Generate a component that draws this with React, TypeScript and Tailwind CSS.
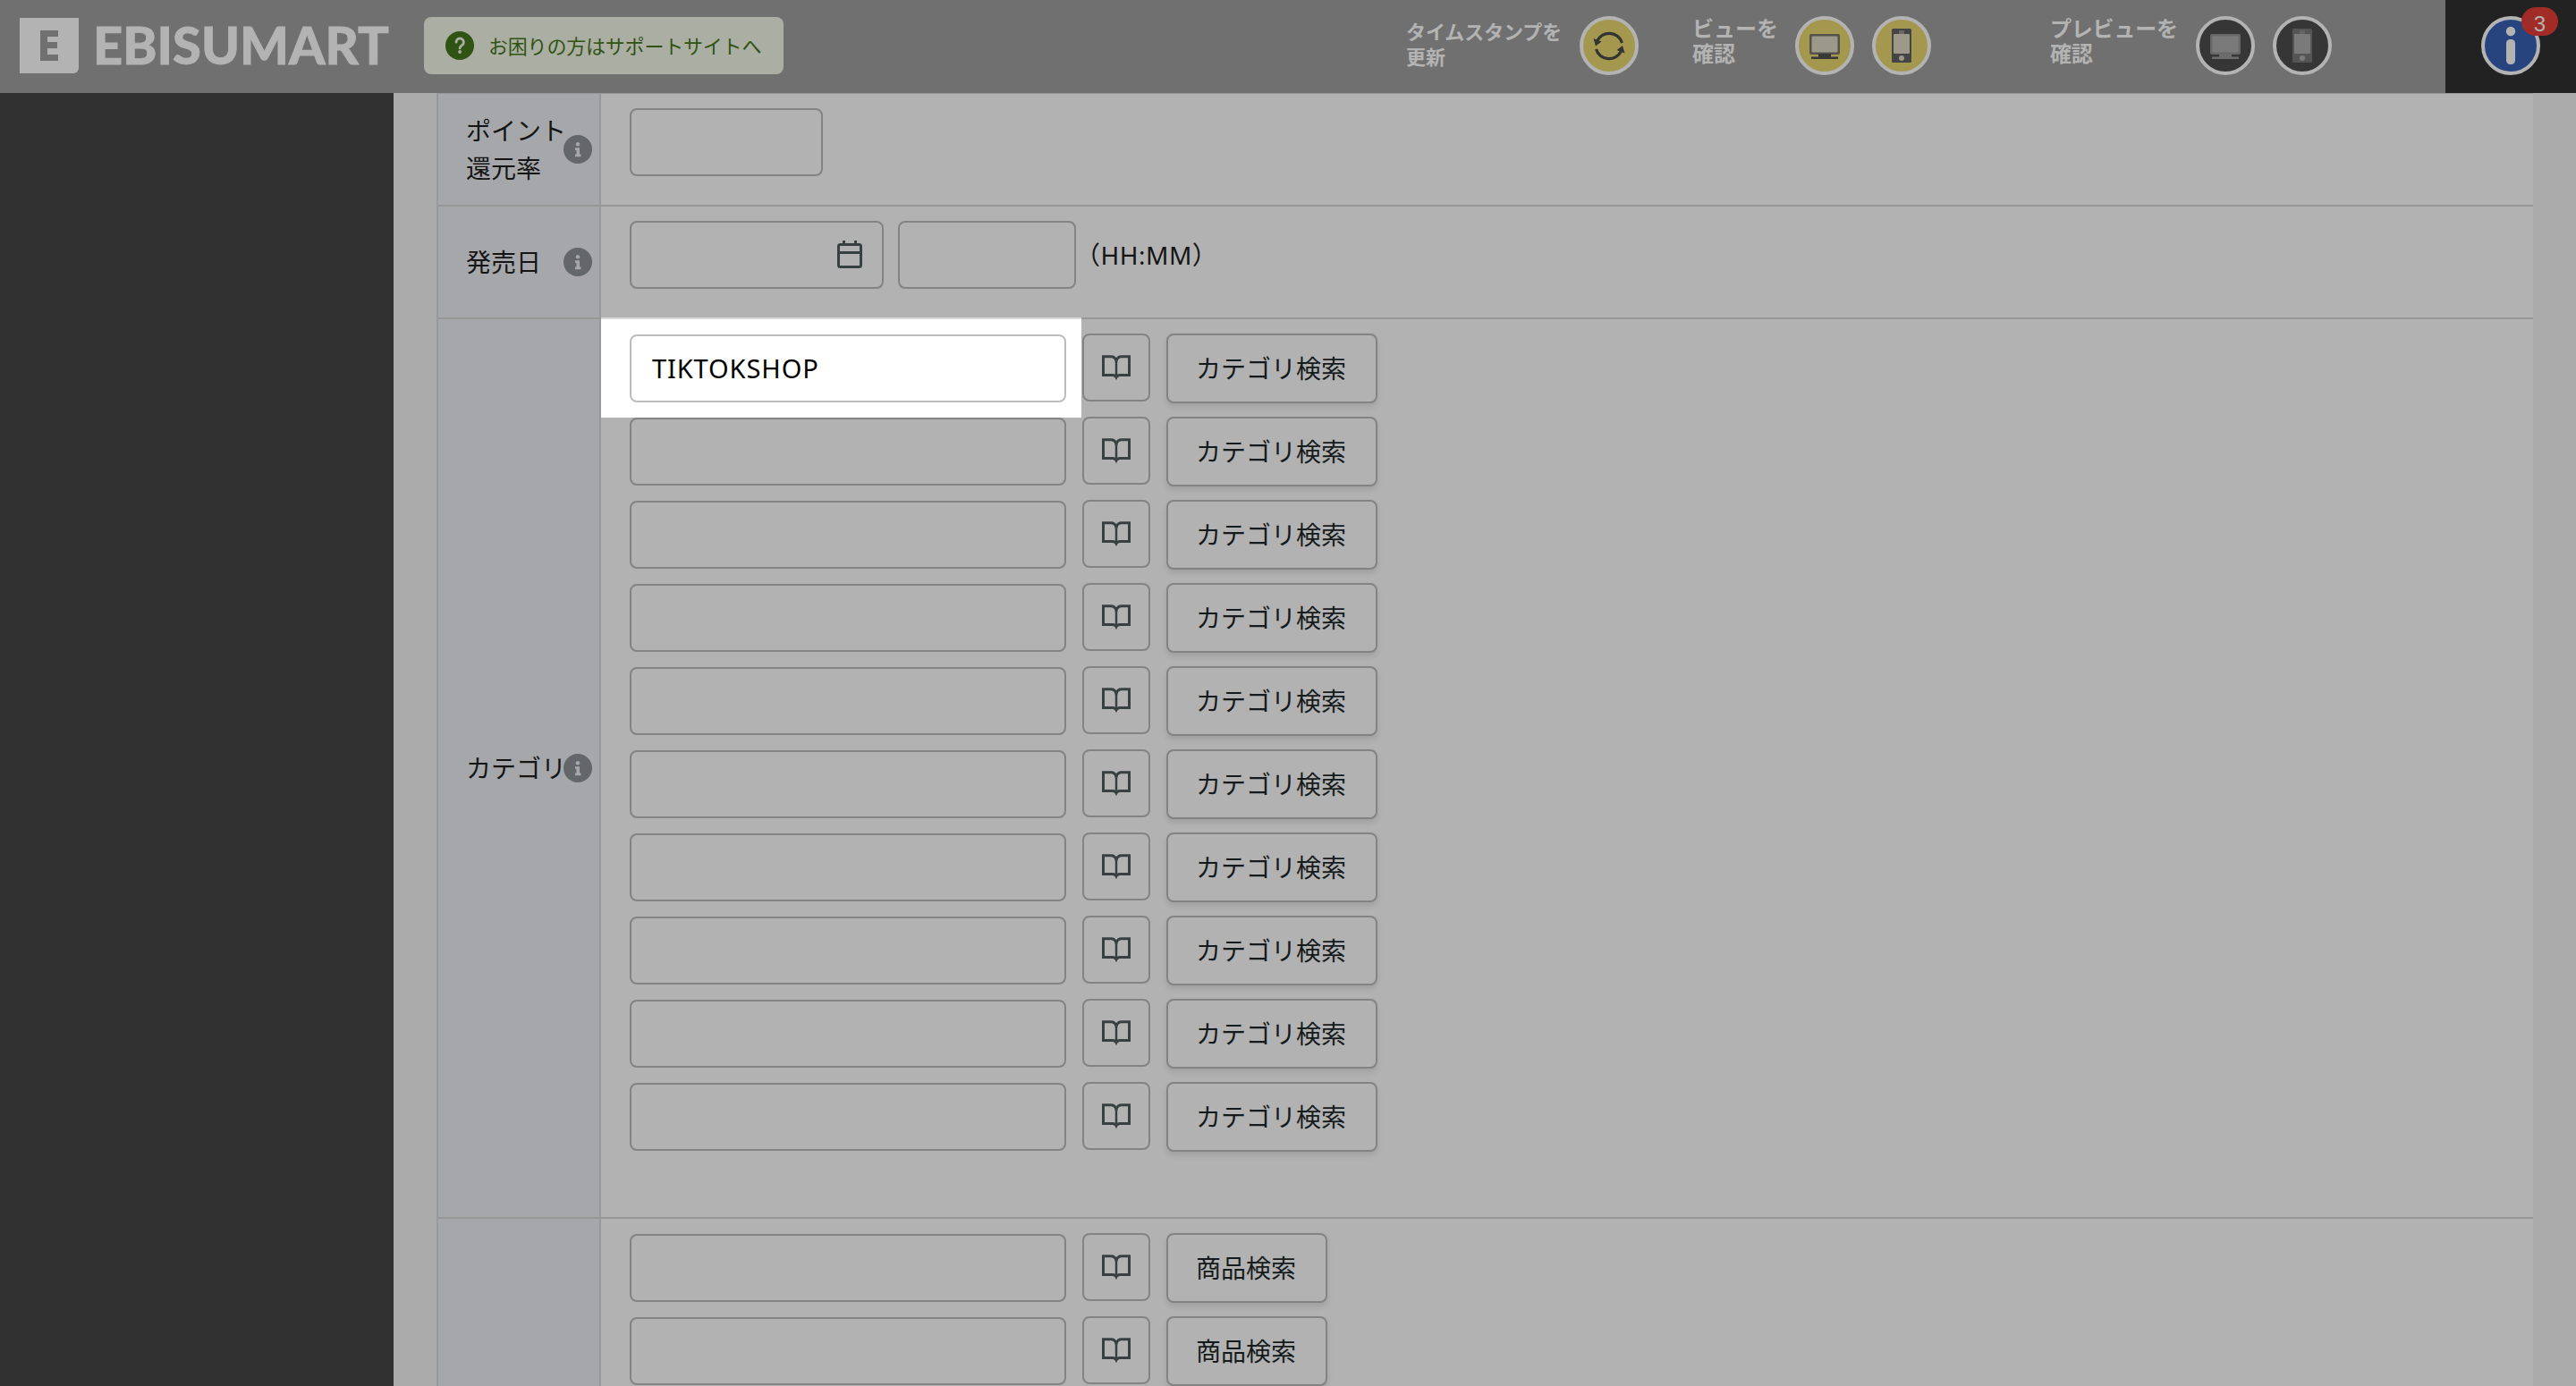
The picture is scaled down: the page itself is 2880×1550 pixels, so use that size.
import type { ReactNode } from "react";

const range = (n: number) => Array.from({ length: n }, (_, i) => i);

const Logo = () => (
    <svg width="420" height="62" viewBox="0 0 420 62" className="ml-[22px] shrink-0">
        <path d="M0 0h66v56a6 6 0 0 1-6 6H0z" fill="#b3b3b3" />
        <path d="M23 14h20v7H31v6h11v7H31v7h12v7H23z" fill="#707070" />
        <text
            x="82"
            y="51.500"
            fontFamily="Lato, sans-serif"
            fontWeight="900"
            fontSize="56.500"
            fill="#b3b3b3"
            stroke="#b3b3b3"
            strokeWidth="0.8"
            textLength="331"
            lengthAdjust="spacingAndGlyphs"
        >
            EBISUMART
        </text>
    </svg>
);

const QuestionIcon = () => (
    <svg width="32" height="32" viewBox="0 0 32 32">
        <circle cx="16" cy="16" r="16" fill="#2f5312" />
        <path d="M12 12.2a4.2 4.2 0 1 1 6.4 3.5c-1.5 1-2.3 1.4-2.3 3.2" fill="none" stroke="#abaea3" strokeWidth="2.8" strokeLinecap="round" />
        <circle cx="16.1" cy="23" r="1.9" fill="#abaea3" />
    </svg>
);

const Round = ({ fill, children }: { fill: string; children: ReactNode }) => (
    <svg width="66" height="66" viewBox="0 0 66 66" className="shrink-0">
        <circle cx="33" cy="33" r="31" fill={fill} stroke="#b3b3b3" strokeWidth="4" />
        {children}
    </svg>
);

const RefreshGlyph = () => (
    <g fill="none" stroke="#333432" strokeWidth="3.2">
        <path d="M19.5 28a15 15 0 0 1 28 2" />
        <path d="M46.5 39a15 15 0 0 1-28-2" />
        <path d="M15.5 25l9 3.5-6.500 5z" fill="#333432" stroke="none" />
        <path d="M50.500 41.500l-9-3.500 6.500-5z" fill="#333432" stroke="none" />
    </g>
);

const MonitorGlyph = ({ frame, base, screen }: { frame: string; base: string; screen: string }) => (
    <g>
        <rect x="16" y="20" width="34" height="23" rx="2" fill={frame} />
        <rect x="18.5" y="22.500" width="29" height="18" rx="1" fill={screen} />
        <path d="M26 42h14v4H26zM18 45.500h30v2.500H18z" fill={base} />
    </g>
);

const PhoneGlyph = ({ frame, screen }: { frame: string; screen: string }) => (
    <g>
        <rect x="22" y="14" width="22" height="38" rx="1.5" fill={frame} />
        <rect x="24" y="20" width="18" height="22" rx="1" fill={screen} />
        <rect x="30" y="16" width="6" height="4" fill={screen} opacity="0.45" />
        <circle cx="33" cy="47" r="3" fill={screen} />
    </g>
);

const InfoIcon = () => (
    <svg width="32" height="32" viewBox="0 0 32 32" className="shrink-0">
        <circle cx="16" cy="16" r="16" fill="#636769" />
        <circle cx="16" cy="10.200" r="2.2" fill="#a5a7aa" />
        <path d="M13 14.200h5v7.300h1.500v2.700h-6.500v-2.700h1.500v-4.600H13z" fill="#a5a7aa" />
    </svg>
);

const CalendarIcon = () => (
    <svg width="30" height="34" viewBox="0 0 30 34" fill="none" stroke="#384042" strokeWidth="3">
        <rect x="2.500" y="6.500" width="25" height="25" rx="2" />
        <path d="M2 15.500h26" />
        <path d="M8.500 2v4M21.500 2v4" />
    </svg>
);

const BookIcon = () => (
    <svg width="32" height="28" viewBox="0 0 32 28" fill="none" stroke="#384042" strokeWidth="3">
        <path d="M16 6.500C15 3 13 1.700 10 1.700H1.500v20.700H12c2 0 3.200.8 4 2.400.8-1.600 2-2.400 4-2.400h10.500V1.700H22c-3 0-5 1.300-6 4.800z" />
        <path d="M16 5v19" strokeWidth="2.500" />
    </svg>
);

const Row = ({ label, height, children }: { label?: ReactNode; height: string; children: ReactNode }) => (
    <div className={`flex shrink-0 border-b-2 border-[#979797] ${height}`}>
        <div className="flex w-[182px] shrink-0 items-center border-r-2 border-[#97999b] bg-[#a5a7aa] pl-[31px]">
            {label && (
                <>
                    <div className="w-[109px] whitespace-nowrap leading-[42px]">{label}</div>
                    <InfoIcon />
                </>
            )}
        </div>
        <div className="relative flex-1 pl-8 pt-4">{children}</div>
    </div>
);

const Box = ({ width, children }: { width: string; children?: ReactNode }) => (
    <div className={`flex h-[76px] shrink-0 items-center rounded-lg border-2 border-[#838383] ${width}`}>{children}</div>
);

const SearchLine = ({ text, wide, value }: { text: string; wide?: boolean; value?: string }) => (
    <div className="relative flex h-[93px] items-start gap-[18px]">
        <div
            className={`mt-px flex h-[76px] w-[488px] items-center rounded-lg border-2 pb-px pl-[23px] text-[29px] font-[450] tracking-[0.9px] text-black ${
                value ? "border-[#bbbcbc]" : "border-[#838383]"
            }`}
        >
            {value}
        </div>
        <div className="flex h-[76px] w-[76px] items-center justify-center rounded-lg border-2 border-[#838383] pb-px">
            <BookIcon />
        </div>
        <div
            className={`flex h-[78px] items-center justify-center rounded-lg border-2 border-[#838383] bg-[#b2b2b2] pr-[2px] text-[#151a1c] shadow-[0_4px_6px_rgba(0,0,0,0.1)] ${
                wide ? "w-[236px]" : "w-[180px]"
            }`}
        >
            {text}
        </div>
    </div>
);

const Header = () => (
    <header className="flex h-[104px] shrink-0 bg-[#707070] font-bold text-[#b3b3b3]">
        <div className="flex h-[102px] w-[1572px] items-center">
            <Logo />
            <div className="ml-[32px] flex h-16 w-[402px] items-center gap-[16px] rounded-lg bg-[#abaea3] pl-6 font-normal text-[22px] tracking-[-0.2px] text-[#2f5312]">
                <QuestionIcon />
                お困りの方はサポートサイトへ
            </div>
        </div>
        <div className="flex h-[102px] w-[320px] items-center">
            <div className="-mt-[4px] w-[194px] whitespace-nowrap text-[22px] leading-7 tracking-[-0.1px]">
                タイムスタンプを
                <br />
                更新
            </div>
            <Round fill="#a4974e">
                <RefreshGlyph />
            </Round>
        </div>
        <div className="flex h-[102px] w-[400px] items-center">
            <div className="-mt-[11px] w-[115px] whitespace-nowrap text-[24px] leading-7">
                ビューを
                <br />
                確認
            </div>
            <div className="flex gap-5">
                <Round fill="#a4974e">
                    <MonitorGlyph frame="#54524a" base="#383838" screen="#9c998b" />
                </Round>
                <Round fill="#a4974e">
                    <PhoneGlyph frame="#444444" screen="#9c998b" />
                </Round>
            </div>
        </div>
        <div className="flex h-[102px] w-[442px] items-center">
            <div className="-mt-[11px] w-[163px] whitespace-nowrap text-[24px] leading-7 tracking-[-0.2px]">
                プレビューを
                <br />
                確認
            </div>
            <div className="flex gap-5">
                <Round fill="#363636">
                    <MonitorGlyph frame="#686868" base="#6c6c6c" screen="#7a7a7a" />
                </Round>
                <Round fill="#363636">
                    <PhoneGlyph frame="#555555" screen="#7a7a7a" />
                </Round>
            </div>
        </div>
        <div className="flex h-[104px] flex-1 bg-[#222222] pl-10 pt-[18px]">
            <div className="relative h-[66px] w-[66px]">
                <Round fill="#27447f">
                    <circle cx="33" cy="17" r="5.2" fill="#b3b3b3" />
                    <rect x="28" y="26" width="10" height="28" rx="4.500" fill="#b3b3b3" />
                </Round>
                <span className="absolute -top-[10px] left-[45px] flex h-8 w-[41px] items-center justify-center rounded-full bg-[#a12b26] pt-[6px] font-['Liberation_Sans',sans-serif] text-[24px] font-normal leading-none">
                    3
                </span>
            </div>
        </div>
    </header>
);

export default function App() {
    return (
        <div className="flex h-[1550px] w-[2880px] flex-col overflow-hidden bg-[#ababab] font-['Noto_Sans','Noto_Sans_CJK_JP',sans-serif] text-[28px] leading-none text-[#151515]">
            <Header />
            <div className="flex min-h-0 flex-1">
                <aside className="w-[440px] shrink-0 bg-[#313131]" />
                <main className="flex flex-1 flex-col overflow-hidden px-12">
                    <div className="flex flex-col border-l-2 border-t border-l-[#97999b] border-t-[#979797] bg-[#b2b2b2]">
                        <Row
                            height="h-[126px]"
                            label={
                                <>
                                    ポイント
                                    <br />
                                    還元率
                                </>
                            }
                        >
                            <Box width="w-[216px]" />
                        </Row>
                        <Row height="h-[126px]" label="発売日">
                            <div className="flex items-center">
                                <Box width="w-[284px]">
                                    <div className="mb-[3px] ml-auto mr-[21px]">
                                        <CalendarIcon />
                                    </div>
                                </Box>
                                <div className="ml-4 flex">
                                    <Box width="w-[199px]" />
                                </div>
                                <span className="-ml-px tracking-[0.5px]">（HH:MM）</span>
                            </div>
                        </Row>
                        <Row height="h-[1006px]" label="カテゴリ">
                            <div className="absolute -top-[2px] left-0 h-[112px] w-[537px] border-t-2 border-[#d9d9d9] bg-white" />
                            {range(10).map((i) => (
                                <SearchLine key={i} wide text="カテゴリ検索" value={i === 0 ? "TIKTOKSHOP" : undefined} />
                            ))}
                        </Row>
                        <Row height="h-[300px]">
                            {range(2).map((i) => (
                                <SearchLine key={i} text="商品検索" />
                            ))}
                        </Row>
                    </div>
                </main>
            </div>
        </div>
    );
}
